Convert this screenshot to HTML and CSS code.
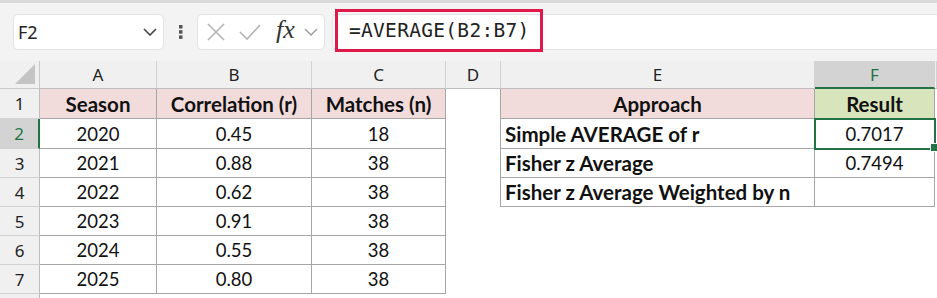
FILE: index.html
```html
<!DOCTYPE html>
<html lang="en">
<head>
    <meta charset="UTF-8">
    <title>Fisher z average</title>
    <link rel="stylesheet" href="styles.css">
</head>
<body>

<div class="toolbar">
    <div class="namebox">
        <span>F2</span>
        <svg class="chev" width="14" height="8" viewBox="0 0 14 8"><polyline points="1,1 7,7 13,1" fill="none" stroke="#444" stroke-width="1.6"/></svg>
    </div>
    <svg class="dots" width="4" height="14" viewBox="0 0 4 14"><rect x="0" y="0" width="3.5" height="3.5" fill="#555"/><rect x="0" y="5.2" width="3.5" height="3.5" fill="#555"/><rect x="0" y="10.4" width="3.5" height="3.5" fill="#555"/></svg>
    <div class="fxbox">
        <svg width="20" height="20" viewBox="0 0 20 20"><path d="M2 2 L18 18 M18 2 L2 18" stroke="#b4b4b4" stroke-width="1.6"/></svg>
        <svg width="22" height="18" viewBox="0 0 22 18"><polyline points="1,9 8,16 21,2" fill="none" stroke="#b4b4b4" stroke-width="1.6"/></svg>
        <span class="fx">fx</span>
        <svg class="fxchev" width="14" height="8" viewBox="0 0 14 8"><polyline points="1,1 7,7 13,1" fill="none" stroke="#999" stroke-width="1.4"/></svg>
    </div>
    <div class="formula">
        <span class="mark">=AVERAGE(B2:B7)</span>
    </div>
</div>

<div class="sheet">
    <!-- column headers -->
    <div class="corner"><svg width="20" height="20" viewBox="0 0 20 20"><polygon points="20,0 20,20 0,20" fill="#c4c4c4"/></svg></div>
    <div class="colhead">A</div>
    <div class="colhead">B</div>
    <div class="colhead">C</div>
    <div class="colhead">D</div>
    <div class="colhead">E</div>
    <div class="colhead active">F</div>
    <div class="colhead"></div>

    <!-- row 1 -->
    <div class="rowhead">1</div>
    <div class="cell t head">Season</div>
    <div class="cell t head">Correlation (r)</div>
    <div class="cell t head">Matches (n)</div>
    <div class="cell"></div>
    <div class="cell t tl head">Approach</div>
    <div class="cell t head green">Result</div>
    <div class="cell"></div>

    <!-- row 2 -->
    <div class="rowhead active">2</div>
    <div class="cell t">2020</div>
    <div class="cell t">0.45</div>
    <div class="cell t">18</div>
    <div class="cell"></div>
    <div class="cell t tl label">Simple AVERAGE of r</div>
    <div class="cell t selected">0.7017<span class="handle"></span></div>
    <div class="cell"></div>

    <!-- row 3 -->
    <div class="rowhead">3</div>
    <div class="cell t">2021</div>
    <div class="cell t">0.88</div>
    <div class="cell t">38</div>
    <div class="cell"></div>
    <div class="cell t tl label">Fisher z Average</div>
    <div class="cell t">0.7494</div>
    <div class="cell"></div>

    <!-- row 4 -->
    <div class="rowhead">4</div>
    <div class="cell t">2022</div>
    <div class="cell t">0.62</div>
    <div class="cell t">38</div>
    <div class="cell"></div>
    <div class="cell t tl label">Fisher z Average Weighted by n</div>
    <div class="cell t"></div>
    <div class="cell"></div>

    <!-- row 5 -->
    <div class="rowhead">5</div>
    <div class="cell t">2023</div>
    <div class="cell t">0.91</div>
    <div class="cell t">38</div>
    <div class="cell"></div>
    <div class="cell"></div>
    <div class="cell"></div>
    <div class="cell"></div>

    <!-- row 6 -->
    <div class="rowhead">6</div>
    <div class="cell t">2024</div>
    <div class="cell t">0.55</div>
    <div class="cell t">38</div>
    <div class="cell"></div>
    <div class="cell"></div>
    <div class="cell"></div>
    <div class="cell"></div>

    <!-- row 7 -->
    <div class="rowhead">7</div>
    <div class="cell t">2025</div>
    <div class="cell t">0.80</div>
    <div class="cell t">38</div>
    <div class="cell"></div>
    <div class="cell"></div>
    <div class="cell"></div>
    <div class="cell"></div>

    <div class="rowhead"></div>
</div>

</body>
</html>
```

FILE: styles.css
```css
body {
    margin: 0;
    padding: 0;
    width: 937px;
    height: 298px;
    overflow: hidden;
    background: #fff;
    font-family: "Noto Sans", sans-serif;
}
.toolbar {
    height: 61px;
    box-sizing: border-box;
    background: #f3f3f3;
    border-top: 3px solid #dadada;
    display: flex;
    align-items: center;
    padding-left: 13px;
}
.namebox {
    width: 151px;
    height: 36px;
    box-sizing: border-box;
    background: #fff;
    border: 1px solid #e3e3e3;
    border-radius: 5px;
    display: flex;
    align-items: center;
    justify-content: space-between;
    padding: 0 6px 0 4px;
    font-size: 18px;
    color: #222;
}
.dots {
    margin: 0 14px 0 15px;
}
.fxbox {
    width: 128px;
    height: 36px;
    box-sizing: border-box;
    background: #fff;
    border: 1px solid #e3e3e3;
    border-radius: 5px;
    display: flex;
    align-items: center;
    padding-left: 8px;
}
.fxbox svg:nth-child(2) {
    margin-left: 13px;
}
.fx {
    font-family: "Liberation Serif", serif;
    font-style: italic;
    font-size: 26px;
    color: #333;
    margin: -4px 0 0 15px;
}
.fxchev {
    margin-left: 9px;
}
.formula {
    flex: 1;
    height: 36px;
    box-sizing: border-box;
    margin-left: 7px;
    background: #fff;
    border: 1px solid #e3e3e3;
    border-right: none;
    border-radius: 5px 0 0 5px;
    display: flex;
    align-items: stretch;
}
.mark {
    margin: -6px 0 -3px 2px;
    width: 208px;
    box-sizing: border-box;
    border: 3px solid #e0194b;
    display: flex;
    align-items: center;
    padding-left: 11px;
    font-family: "DejaVu Sans Mono", monospace;
    font-size: 19.5px;
    letter-spacing: 0.3px;
    color: #222;
}

.sheet {
    display: grid;
    grid-template-columns: 40px 117px 155px 134px 55px 314px 120px 1fr;
    grid-template-rows: 28px 30px 30px 29px 29px 29px 29px 29px 1fr;
    height: 237px;
}
.corner {
    background: #f0f0f0;
    border-right: 1px solid #c8c8c8;
    border-bottom: 1px solid #c8c8c8;
    display: flex;
    align-items: flex-end;
    justify-content: flex-end;
    padding: 0 4px 4px 0;
}
.colhead {
    background: #f0f0f0;
    border-right: 1px solid #d2d2d2;
    border-bottom: 1px solid #bdbdbd;
    display: flex;
    align-items: center;
    justify-content: center;
    font-size: 17px;
    color: #222;
}
.colhead:last-child {
    border-right: none;
}
.colhead.active {
    background: #d3d3d3;
    color: #217346;
    border-bottom: 2px solid #217346;
}
.rowhead {
    grid-column: 1;
    background: #f0f0f0;
    border-right: 1px solid #bdbdbd;
    border-bottom: 1px solid #d2d2d2;
    display: flex;
    align-items: center;
    justify-content: center;
    font-size: 17px;
    color: #222;
}
.rowhead.active {
    background: #d3d3d3;
    color: #217346;
    border-right: 2px solid #217346;
}
.rowhead:last-child {
    border-bottom: none;
}
.cell {
    display: flex;
    align-items: center;
    justify-content: center;
    font-family: "Lato", sans-serif;
    font-size: 18.5px;
    color: #111;
    white-space: nowrap;
    position: relative;
}
.cell.t {
    border-right: 1px solid #a6a6a6;
    border-bottom: 1px solid #a6a6a6;
}
.cell.tl {
    border-left: 1px solid #a6a6a6;
    margin-left: -1px;
}
.cell.label {
    justify-content: flex-start;
    padding-left: 4px;
    font-weight: bold;
    font-size: 20.5px;
}
.head {
    background: #f2dcdb;
    font-weight: bold;
    font-size: 20.5px;
}
.head.green {
    background: #d8e4bc;
}
.selected {
    outline: 2px solid #217346;
    outline-offset: -1px;
    z-index: 1;
}
.handle {
    position: absolute;
    right: -5px;
    bottom: -4px;
    width: 7px;
    height: 7px;
    background: #217346;
    border: 1px solid #fff;
}
```
